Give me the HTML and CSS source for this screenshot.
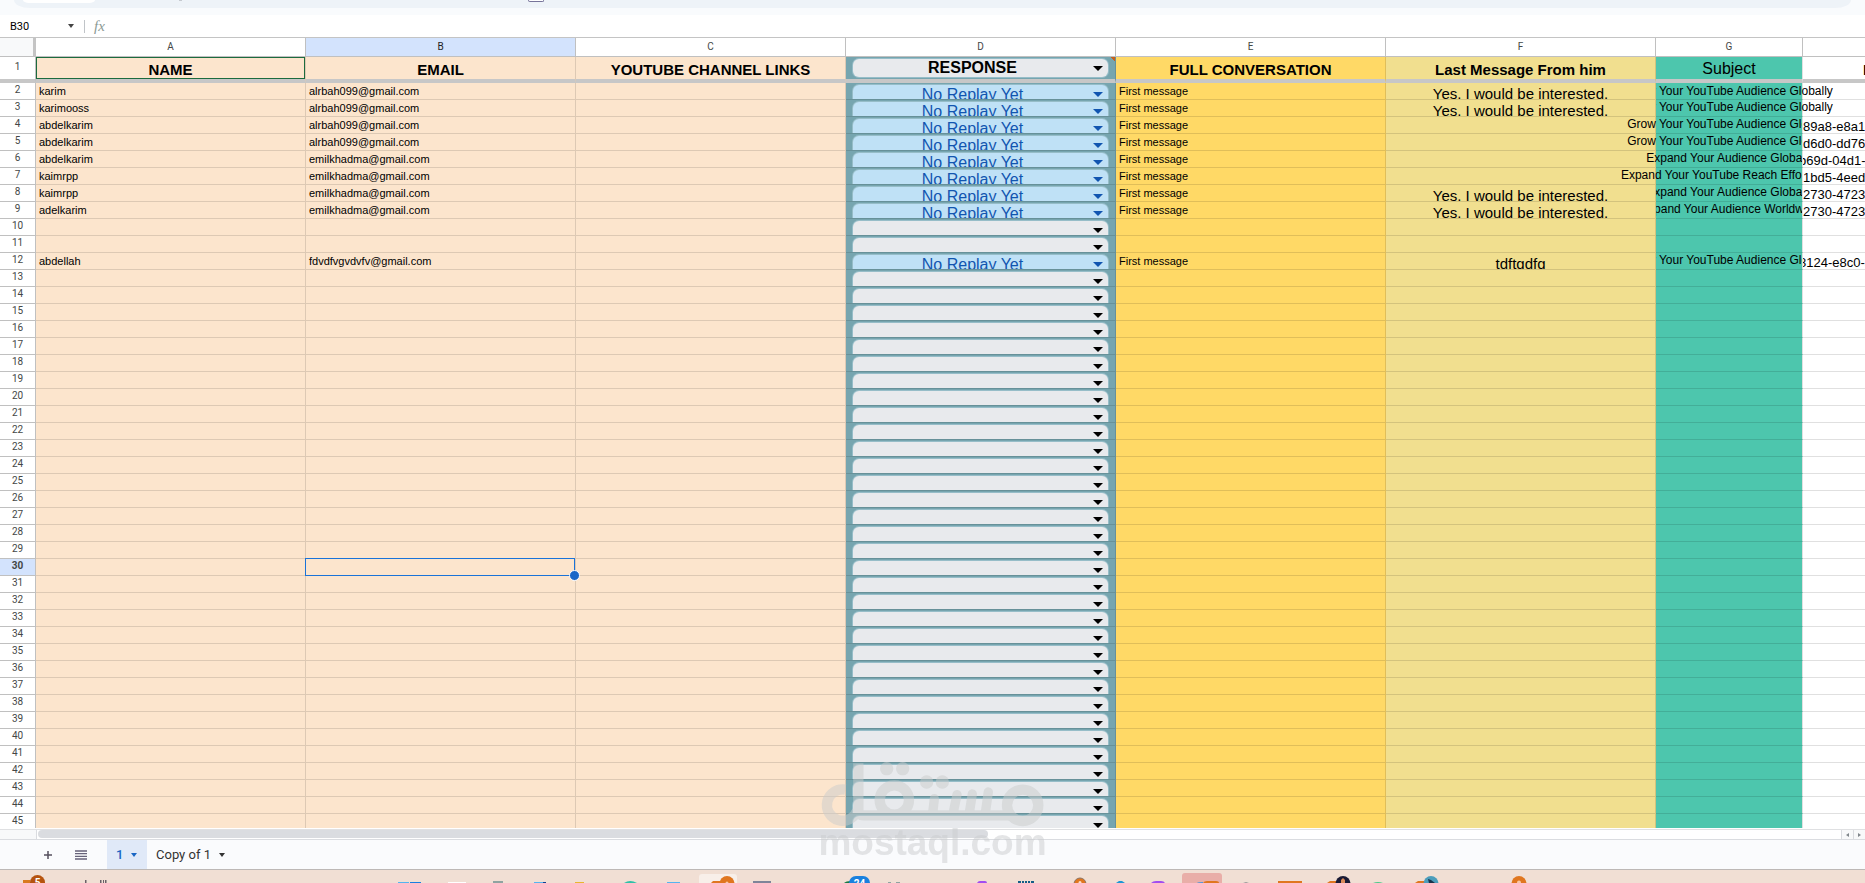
FILE: index.html
```html
<!DOCTYPE html>
<html lang="en">
<head>
<meta charset="utf-8">
<title>Spreadsheet</title>
<link rel="stylesheet" href="styles.css">
</head>
<body>
<div class="toolbar">
  <div class="toolbar-pill">
    <span class="toolbar-search"></span>
    <span class="toolbar-mark"></span>
    <span class="toolbar-box"></span>
  </div>
</div>

<div class="formula-bar">
  <input class="name-box" aria-label="Name box" value="B30">
  <button class="name-arrow" aria-label="Named ranges"><span class="caret"></span></button>
  <span class="divider"></span>
  <label class="fx" for="formula">fx</label>
  <input class="formula" id="formula">
</div>

<main class="sheet">
  <table class="grid">
    <colgroup>
      <col class="col-num"><col class="col-wide"><col class="col-wide"><col class="col-wide"><col class="col-wide"><col class="col-wide"><col class="col-wide"><col class="col-subject"><col>
    </colgroup>
    <thead>
      <tr class="letters">
        <th class="corner"></th><th>A</th><th class="active">B</th><th>C</th><th>D</th><th>E</th><th>F</th><th>G</th><th class="plain"></th>
      </tr>
      <tr class="titles">
        <th class="num"><div>1</div></th>
        <th class="peach named"><div>NAME</div></th>
        <th class="peach"><div>EMAIL</div></th>
        <th class="peach"><div>YOUTUBE CHANNEL LINKS</div></th>
        <th class="teal noted"><div class="chip"><select aria-label="Response heading"><option>RESPONSE</option></select></div></th>
        <th class="amber"><div>FULL CONVERSATION</div></th>
        <th class="khaki"><div>Last Message From him</div></th>
        <th class="green"><div>Subject</div></th>
        <th class="plain"><div>D</div></th>
      </tr>
    </thead>
    <tbody id="rows"></tbody>
  </table>
</main>

<div class="scroll-row">
  <span class="scroll-corner"></span>
  <span class="scroll-track"><span class="scroll-thumb"></span></span>
  <button class="scroll-step" aria-label="Scroll left"><span class="step-left"></span></button>
  <button class="scroll-step" aria-label="Scroll right"><span class="step-right"></span></button>
</div>

<nav class="tabs">
  <button class="tab-icon" aria-label="Add sheet"><svg width="12" height="12" viewBox="0 0 12 12"><path d="M6 2v8M2 6h8" stroke="#55505e" stroke-width="1.5"/></svg></button>
  <button class="tab-icon" aria-label="All sheets"><svg width="12" height="12" viewBox="0 0 12 12"><path d="M0 2h12M0 4.700h12M0 7.300h12M0 10h12" stroke="#67637a" stroke-width="1.300"/></svg></button>
  <button class="tab tab-on">1<span class="caret"></span></button>
  <button class="tab">Copy of 1<span class="caret"></span></button>
</nav>

<footer class="taskbar">
  <svg width="1865" height="13" viewBox="0 870 1865 13">
    <path d="M23 880h7v3h-7z" fill="#d9791f"/>
    <circle cx="37.500" cy="882.500" r="7.500" fill="#b5530f"/>
    <text class="badge" x="37.500" y="886" text-anchor="middle">5</text>
    <path d="M85 880h1.500v3h-1.500zM100 880h1.500v3h-1.500zM103 880h1v3h-1zM105 880h1.500v3h-1.500z" fill="#6a6068"/>
    <path d="M398 882h11v1h-11zM534 882h9v1h-9zM667 882h13v1h-13z" fill="#55b4f0"/>
    <path d="M410 882h11v1h-11z" fill="#1a7fe0"/>
    <path d="M543 882h3v1h-3z" fill="#123f92"/>
    <path d="M448 882h18v1h-18z" fill="#fff"/>
    <path d="M493 881h10v2h-10z" fill="#8fa3a1"/>
    <path d="M575 882h9v1h-9z" fill="#eab52f"/>
    <path d="M624 883q6-4 13 0z" fill="#2fc0a8"/>
    <path d="M699 883v-6q0-3 3-3h32q3 0 3 3v6z" fill="#f8efe9"/>
    <path d="M711 883l2-2h9v2zM1278 881h24v2h-24zM1327 883l3-2h6v2zM1415 883l3-2h6v2z" fill="#e0761f"/>
    <circle cx="727" cy="883.500" r="7.500" fill="#e0761f"/>
    <circle cx="727" cy="883" r="1.500" fill="#f8c9a4"/>
    <path d="M753 881h18v2h-18z" fill="#7f8499"/>
    <path d="M844 883q2-2 7-2v2z" fill="#157a45"/>
    <rect x="849" y="876" width="21" height="14" rx="7" fill="#1a80de"/>
    <text class="badge" x="859.500" y="887" text-anchor="middle">24</text>
    <path d="M888 882h3v1h-3zM896 882h4v1h-4z" fill="#8fa3a1"/>
    <path d="M977 883q1-2 3-2h5q2 0 2 2zM1151 883q2-2 5-2h5q3 0 4 2z" fill="#a24cf0"/>
    <path d="M1018 881h3v2h-3zM1022 881h2v2h-2zM1025 881h2v2h-2zM1028 881h2v2h-2zM1031 881h3v2h-3z" fill="#155d87"/>
    <circle cx="1080" cy="884" r="6" fill="#e0761f" stroke="#8b7364"/>
    <circle cx="1080" cy="882.500" r="1.500" fill="#fbe0cb"/>
    <path d="M1116 883l3-2h3l3 2z" fill="#1c96d6"/>
    <path d="M1182 883v-7q0-3 3-3h34q3 0 3 3v7z" fill="#e9aea8"/>
    <path d="M1197 883q1-1 6-1v1z" fill="#4d95dc"/>
    <path d="M1203 883q1-2 4-2h9q3 0 3 2z" fill="#e0761f"/>
    <path d="M1243 883l3-1 3 1z" fill="#999"/>
    <circle cx="1343" cy="883.500" r="7.500" fill="#191a35"/>
    <path d="M1341 883v-3l2-2 2 2v3z" fill="#d98a5a"/>
    <path d="M1373 883q5-2 10 0z" fill="#4bc98a"/>
    <circle cx="1431" cy="883.500" r="7.500" fill="#4d9dbb"/>
    <path d="M1428 879l3 1 4 3h-6z" fill="#18324a"/>
    <circle cx="1519" cy="883.500" r="7.500" fill="#e0761f"/>
    <circle cx="1519" cy="882.500" r="2" fill="#f8c9a4"/>
  </svg>
</footer>

<div class="watermark">
  <svg width="225" height="66" viewBox="120 68 675 198" aria-hidden="true">
    <g fill="none" stroke="#c9cccc" stroke-width="31">
      <path d="M196 151a47 47 0 1 0 36 62"/>
      <path d="M235 72V213q0 15 15 15H690"/>
      <circle cx="343" cy="182" r="44"/>
      <circle cx="728" cy="198" r="47"/>
      <path d="M463 178l-4 36M531 166l-10 48M577 164l-8 50M625 158l-8 56" stroke-linecap="round" stroke-width="28"/>
    </g>
    <g fill="#c9cccc">
      <circle cx="320" cy="88" r="20"/><circle cx="368" cy="88" r="20"/>
      <circle cx="440" cy="128" r="20"/><circle cx="487" cy="128" r="20"/>
    </g>
  </svg>
  <span class="watermark-name">mostaql.com</span>
</div>
<script src="rows.js"></script>
</body>
</html>
```

FILE: styles.css
```css
* { box-sizing: border-box; }
body {
  margin: 0;
  height: 100vh;
  display: flex;
  flex-direction: column;
  overflow: hidden;
  background: #fff;
  color: #000;
  font-family: "Liberation Sans", Arial, sans-serif;
}
button, input, select { font: inherit; color: inherit; border: 0; padding: 0; margin: 0; background: none; outline: 0; }
.caret {
  width: 0;
  height: 0;
  border: 3px solid transparent;
  border-top: 4px solid currentColor;
  border-bottom: 0;
}

.toolbar { flex: none; height: 15px; padding: 0 14px; background: #f9fbfd; }
.toolbar-pill { height: 8px; padding-left: 9px; display: flex; background: #eef3f8; border-radius: 0 0 16px 16px / 0 0 8px 8px; }
.toolbar-search { width: 72px; height: 3px; background: #fff; border-radius: 0 0 6px 6px / 0 0 3px 3px; }
.toolbar-mark { width: 3px; height: 1px; margin-left: 84px; background: #c6cad0; }
.toolbar-box { width: 16px; height: 2px; margin-left: 346px; border: 1px solid #77749a; border-top: 0; border-radius: 0 0 2px 2px; background: #fff; }

.formula-bar { flex: none; height: 23px; display: flex; align-items: center; border-bottom: 1px solid #c4c4c4; font-family: Roboto, sans-serif; font-size: 11px; }
.name-box { width: 56px; padding-left: 10px; }
.name-arrow { width: 28px; height: 16px; padding-left: 12px; display: flex; align-items: center; color: #444; }
.divider { width: 1px; height: 13px; background: #c0c4c8; }
.fx { margin-left: 9px; width: 20px; color: #8b9a95; font: italic 15px "Liberation Serif", serif; }
.formula { flex: 1; }

.sheet { flex: 1; min-height: 0; overflow: hidden; border-bottom: 1px solid #fff; }
.grid { width: 100%; table-layout: fixed; border-collapse: separate; border-spacing: 0; }
.col-num { width: 36px; }
.col-wide { width: 270px; }
.col-subject { width: 147px; }
.grid th, .grid td { padding: 0; font-weight: normal; border-right: 1px solid rgba(0, 0, 0, .12); }
.grid .plain { border-right: 0; }
.grid div { white-space: nowrap; }

.letters th { height: 19px; font: 10px/18px Roboto, sans-serif; color: #444746; border-right-color: #c0c0c0; border-bottom: 1px solid #c0c0c0; }
.letters .corner { background: #f8f9fa; border-right: 3px solid #c4c4c4; }
.letters .active { background: #d3e3fd; color: #1f1f1f; }

.titles th { border-bottom: 4px solid #c7c7c7; font-size: 15px; }
.titles div { height: 22px; padding-top: 2px; line-height: 21px; text-align: center; font-weight: bold; overflow: hidden; }
.titles .named div { box-shadow: inset 0 0 0 1px #1c6b3e; }
.titles .green div { padding-top: 1px; font-size: 16px; font-weight: normal; }
.titles .plain div { text-align: left; padding-left: 60px; }
.titles .num div { padding: 0; line-height: 20px; font-weight: normal; }

.grid .num { font: 10px/14px Roboto, sans-serif; color: #444746; text-align: center; border-right-color: #c0c0c0; }
.peach { background: #fce5cd; }
.teal { background: #76a5af; }
.amber { background: #ffd966; }
.khaki { background: #f1df8f; }
.green { background: #4dc6ad; }
.grid .green { border-right-color: #e0e0e0; }

tbody td, tbody .num { border-bottom: 1px solid rgba(0, 0, 0, .12); }
tbody .num { border-bottom-color: #c0c0c0; }
tbody .num.active { background: #d3e3fd; font-weight: bold; }
tbody td div, tbody .num div { height: 16px; }
tbody .small { padding-left: 3px; font-size: 11px; line-height: 17px; }
tbody .message { padding-top: 2px; font-size: 15px; line-height: 17px; text-align: center; overflow: hidden; }
tbody .thread { padding-top: 1px; font-size: 13px; line-height: 17px; overflow: hidden; }
tbody .cut { text-indent: -4px; }
tbody .subject { display: flex; justify-content: center; padding-left: 2px; font-size: 12px; line-height: 15px; }
tbody tr:first-child .subject { line-height: 17px; }
.spill-left { clip-path: inset(0 0 0 -60px); }
.spill-right { clip-path: inset(0 -60px 0 0); }
.spill-none { clip-path: inset(0); }

.chip { position: relative; overflow: hidden; }
.grid .chip { padding: 2px 7px 0; }
.titles .chip { line-height: 18px; }
.chip select {
  display: block;
  width: 100%;
  height: 19px;
  padding-right: 16px;
  appearance: none;
  text-align: center;
  text-align-last: center;
  font-size: 16px;
  border-radius: 6px 6px 0 0;
  background: #e8eaed;
  box-shadow: 0 0 0 1px rgba(190, 220, 230, .45);
}
.titles .chip select { height: 18px; border-radius: 6px; font-size: 16px; font-weight: bold; padding-bottom: 2px; }
.chip::after {
  content: "";
  position: absolute;
  right: 12px;
  top: 9px;
  border: 5px solid transparent;
  border-top-color: currentColor;
  border-bottom: 0;
}
.chip.sent { color: #1155b0; }
.chip.sent select { background: #bfe1f6; }
.noted { background: linear-gradient(225deg, #c8601c 3px, transparent 3px) #76a5af; }

.selected { position: relative; }
.selected div { position: absolute; inset: -1px 0 -1px -1px; height: auto; border: 1px solid #1a73d8; }
.selected div::after { content: ""; position: absolute; right: -6px; bottom: -6px; width: 9px; height: 9px; border: 1px solid #fff; border-radius: 50%; background: #1967c8; }

.scroll-row { flex: none; height: 11px; display: flex; border-top: 1px solid #dfe0e2; border-bottom: 1px solid #dadce0; }
.scroll-corner { width: 37px; background: #f8f9fa; border-right: 1px solid #dadce0; }
.scroll-track { flex: 1; padding: 0 1px; }
.scroll-thumb { display: block; width: 52.7%; height: 8px; border-radius: 4px; background: #dadce0; }
.scroll-step { width: 12px; display: flex; align-items: center; justify-content: center; border-left: 1px solid #dadce0; background: #f8f9fa; }
.step-left, .step-right { border: 2px solid transparent; }
.step-left { border-right: 3px solid #80868b; border-left: 0; }
.step-right { border-left: 3px solid #80868b; border-right: 0; }

.tabs { flex: none; height: 29px; padding-left: 31px; display: flex; background: #fafbfd; font-family: Roboto, sans-serif; font-size: 13px; }
.tab-icon { width: 33px; display: flex; align-items: center; justify-content: center; }
.tab { padding: 0 9px; display: flex; align-items: center; gap: 8px; color: #333; }
.tab-on { width: 40px; margin-left: 10px; background: #e0e9f8; color: #1a66c4; font-weight: 500; }

.taskbar { flex: none; height: 14px; overflow: hidden; border-top: 1px solid #bdb8b6; background: #f1dfd4; }
.taskbar svg { display: block; }
.badge { fill: #fff; font: bold 10px Roboto, sans-serif; }

.watermark { position: fixed; left: 50%; bottom: 25px; width: 226px; margin-left: -113px; display: flex; flex-direction: column; align-items: center; opacity: .5; pointer-events: none; }
.watermark-name { color: #c9cbce; font-size: 37px; font-weight: bold; line-height: 30px; }
```

FILE: rows.js
```js
const yes = "Yes. I would be interested.";
const grow = "Grow Your YouTube Audience Globally";
const data = {
  2: ["karim", "alrbah099@gmail.com", yes, grow, "", "right"],
  3: ["karimooss", "alrbah099@gmail.com", yes, grow, "", "right"],
  4: ["abdelkarim", "alrbah099@gmail.com", "", grow, "89a8-e8a1-", "left"],
  5: ["abdelkarim", "alrbah099@gmail.com", "", grow, "d6d0-dd76-", "left"],
  6: ["abdelkarim", "emilkhadma@gmail.com", "", "Expand Your Audience Globally", "b69d-04d1-c", "left"],
  7: ["kaimrpp", "emilkhadma@gmail.com", "", "Expand Your YouTube Reach Effortlessly", "1bd5-4eed-", "left"],
  8: ["kaimrpp", "emilkhadma@gmail.com", yes, "Expand Your Audience Globally", "2730-4723-", "none"],
  9: ["adelkarim", "emilkhadma@gmail.com", yes, "Expand Your Audience Worldwide", "2730-4723-", "none"],
  12: ["abdellah", "fdvdfvgvdvfv@gmail.com", "tdftgdfg", grow, "8124-e8c0-3", "none"]
};

const cell = (color, kind, text) =>
  `<td class="${color}"><div class="${kind}">${text}</div></td>`;

let html = "";
for (let n = 2; n <= 45; n++) {
  const [name, email, message, subject, thread, spill] = data[n] || ["", "", "", "", "", "none"];
  const status = name ? "No Replay Yet" : "";
  const picked = n === 30;
  html += `<tr><th class="num${picked ? " active" : ""}"><div>${n}</div></th>`
    + cell("peach", "small", name)
    + cell(picked ? "peach selected" : "peach", "small", email)
    + cell("peach", "small", "")
    + `<td class="teal"><div class="chip${name ? " sent" : ""}"><select aria-label="Response, row ${n}"><option>${status}</option></select></div></td>`
    + cell("amber", "small", name ? "First message" : "")
    + cell("khaki", "message", message)
    + cell("green", "subject spill-" + spill, subject)
    + cell("plain", thread.length > 10 ? "thread cut" : "thread", thread)
    + "</tr>";
}
document.getElementById("rows").innerHTML = html;
```
